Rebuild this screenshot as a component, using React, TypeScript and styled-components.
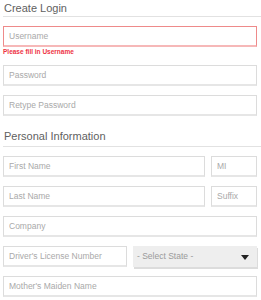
import React from "react";
import styled, { createGlobalStyle } from "styled-components";

const Global = createGlobalStyle`
  html, body { margin: 0; padding: 0; background: #fff; }
  body { font-family: "Liberation Sans", Arial, sans-serif; }
  * { box-sizing: border-box; }
`;

const Form = styled.form`
  width: 261px;
  padding: 0 4px 0 3px;
  display: flex;
  flex-direction: column;
`;

const SectionTitle = styled.div<{ $top?: number; $under?: number }>`
  font-size: 11px;
  line-height: 16px;
  color: #5f5f5f;
  padding-left: 1px;
  padding-bottom: ${(p) => p.$under ?? 0}px;
  margin-top: ${(p) => p.$top ?? 0}px;
  margin-right: -4px;
  border-bottom: 1px solid #e2e2e2;
  margin-bottom: 9px;
`;

const Row = styled.div`
  display: flex;
  gap: 6px;
  margin-bottom: 9px;
`;

const Field = styled.input<{ $error?: boolean; $w?: number }>`
  display: block;
  height: 21px;
  width: ${(p) => (p.$w ? `${p.$w}px` : "100%")};
  flex: ${(p) => (p.$w ? "none" : "1")};
  min-width: 0;
  margin: 0;
  padding: 0 5px;
  font-family: "Liberation Sans", Arial, sans-serif;
  font-size: 8.5px;
  color: #444;
  background: #fff;
  border: 1px solid ${(p) => (p.$error ? "#ee8a8a" : "#dcdcdc")};
  border-bottom: 2px solid ${(p) => (p.$error ? "#f6b8b8" : "#e6e6e6")};
  border-radius: 0;
  outline: none;
  &::placeholder { color: #a9a9a9; }
`;

const ErrorText = styled.div`
  font-size: 6.5px;
  line-height: 10px;
  font-weight: bold;
  color: #ee3344;
  margin-top: -9px;
  margin-bottom: 8px;
`;

const Select = styled.div`
  flex: none;
  width: 124px;
  height: 21px;
  background: #eeeeee;
  box-shadow: 1px 2px 0 #dcdcdc;
  display: flex;
  align-items: center;
  justify-content: space-between;
  padding: 0 8px 1px 4px;
  font-size: 8.5px;
  color: #9a9a9a;
`;

const Arrow = styled.span`
  width: 0;
  height: 0;
  border-left: 4px solid transparent;
  border-right: 4px solid transparent;
  border-top: 5px solid #222;
  margin-top: 2px;
`;

export default function App() {
  return (
    <>
      <Global />
      <Form onSubmit={(e) => e.preventDefault()}>
        <SectionTitle>Create Login</SectionTitle>
        <Row>
          <Field $error placeholder="Username" />
        </Row>
        <ErrorText>Please fill in Username</ErrorText>
        <Row>
          <Field type="password" placeholder="Password" />
        </Row>
        <Row>
          <Field type="password" placeholder="Retype Password" />
        </Row>
        <SectionTitle $top={3} $under={2}>Personal Information</SectionTitle>
        <Row>
          <Field placeholder="First Name" />
          <Field $w={46} placeholder="MI" />
        </Row>
        <Row>
          <Field placeholder="Last Name" />
          <Field $w={46} placeholder="Suffix" />
        </Row>
        <Row>
          <Field placeholder="Company" />
        </Row>
        <Row>
          <Field placeholder="Driver's License Number" />
          <Select>
            <span>- Select State -</span>
            <Arrow />
          </Select>
        </Row>
        <Row>
          <Field placeholder="Mother's Maiden Name" />
        </Row>
      </Form>
    </>
  );
}
